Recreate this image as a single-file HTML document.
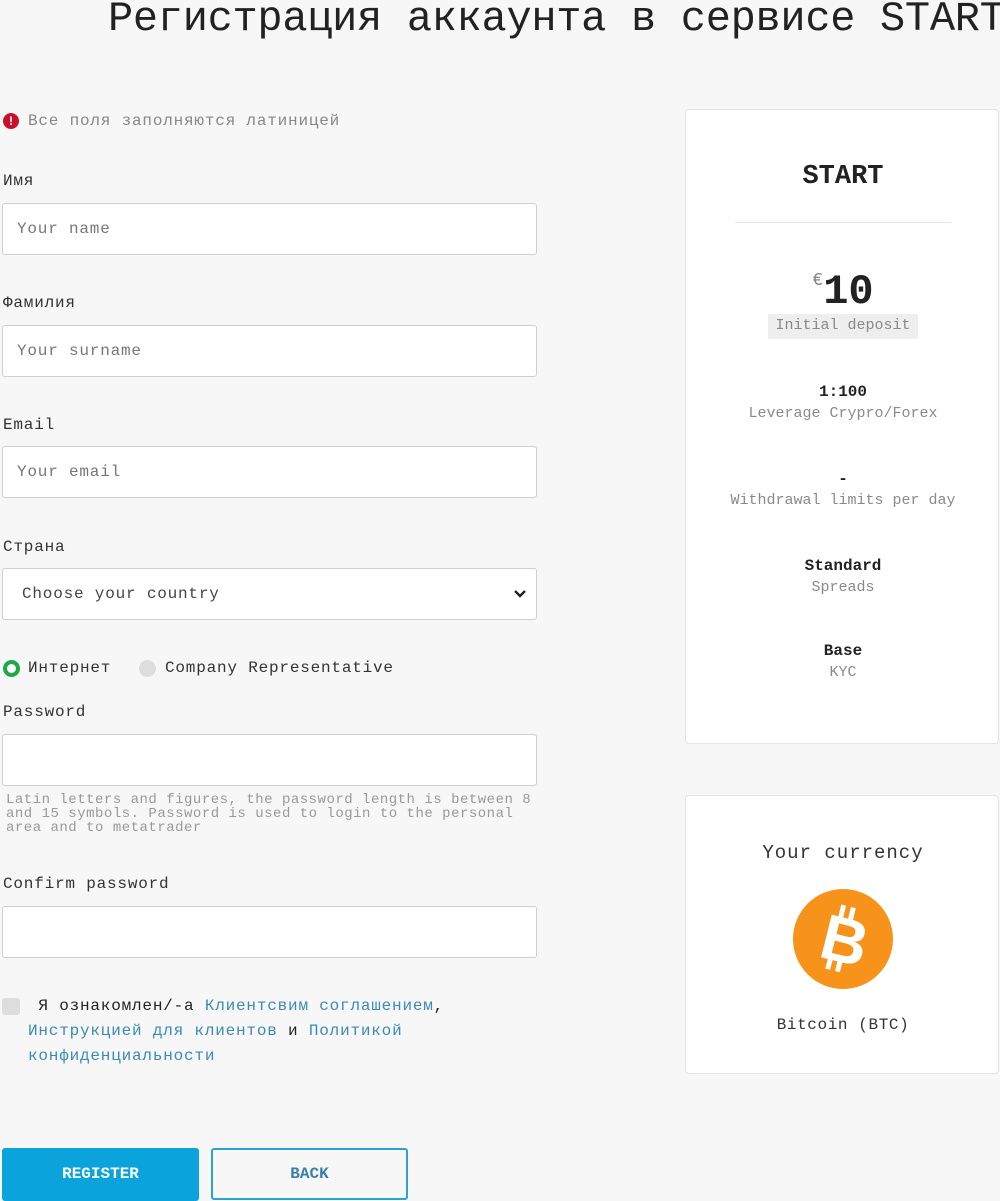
<!DOCTYPE html>
<html><head><meta charset="utf-8"><style>
*{margin:0;padding:0;box-sizing:border-box}
body{width:1000px;height:1201px;background:#f7f7f7;font-family:"Liberation Mono",monospace;color:#222;position:relative;overflow:hidden}
.a{position:absolute;white-space:nowrap}
.t{font-size:16px;letter-spacing:0.8px;line-height:20px}
.lbl{left:3px;color:#333}
.inp{position:absolute;left:2px;width:535px;height:52px;background:#fff;border:1px solid #cfcfcf;border-radius:3px}
.ph{position:absolute;left:14px;top:15px;color:#777}
.card{position:absolute;left:685px;width:314px;background:#fff;border:1px solid #e3e3e3;border-radius:4px}
.c{position:absolute;left:0;width:314px;text-align:center;white-space:nowrap}
.b{font-weight:bold;font-size:16px;color:#222}
.g{font-size:15px;color:#8a8a8a}
.lnk{color:#3a8ab8}
</style></head><body>
<div class="a" style="left:108px;top:-1px;font-size:42px;letter-spacing:-0.3px;line-height:41px;color:#222">Регистрация аккаунта в сервисе START</div>

<div class="a" style="left:3px;top:113px;width:16px;height:16px;border-radius:50%;background:#c8102e;color:#fff;font:bold 12px/16px 'Liberation Sans',sans-serif;text-align:center">!</div>
<div class="a t" style="left:28px;top:111px;color:#888">Все поля заполняются латиницей</div>

<div class="a t lbl" style="top:171px">Имя</div>
<div class="inp" style="top:203px"><div class="ph t">Your name</div></div>
<div class="a t lbl" style="top:293px">Фамилия</div>
<div class="inp" style="top:325px"><div class="ph t">Your surname</div></div>
<div class="a t lbl" style="top:415px">Email</div>
<div class="inp" style="top:446px"><div class="ph t">Your email</div></div>
<div class="a t lbl" style="top:537px">Страна</div>
<div class="inp" style="top:568px"><div class="ph t" style="left:19px;color:#444">Choose your country</div>
<svg style="position:absolute;right:9px;top:20px" width="14" height="10" viewBox="0 0 14 10"><path d="M2 2 L7 7 L12 2" stroke="#222" stroke-width="2.4" fill="none"/></svg></div>

<div class="a" style="left:3px;top:660px;width:17px;height:17px;border-radius:50%;border:4px solid #1fa84a;background:#fff"></div>
<div class="a t" style="left:28px;top:658px;color:#333">Интернет</div>
<div class="a" style="left:139px;top:660px;width:17px;height:17px;border-radius:50%;background:#ddd"></div>
<div class="a t" style="left:165px;top:658px;color:#333">Company Representative</div>

<div class="a t lbl" style="top:702px">Password</div>
<div class="inp" style="top:734px"></div>
<div class="a" style="left:6px;top:793px;font-size:14px;line-height:14px;letter-spacing:0.5px;color:#999;white-space:normal;width:540px">Latin letters and figures, the password length is between 8<br>and 15 symbols. Password is used to login to the personal<br>area and to metatrader</div>
<div class="a t lbl" style="top:874px">Confirm password</div>
<div class="inp" style="top:906px"></div>

<div class="a" style="left:2px;top:998px;width:18px;height:17px;border-radius:3px;background:#ddd"></div>
<div class="a t" style="left:28px;top:994px;line-height:25px;white-space:normal;width:450px;color:#222">&nbsp;Я ознакомлен/-а <span class="lnk">Клиентсвим соглашением</span>,<br><span class="lnk">Инструкцией для клиентов</span> и <span class="lnk">Политикой</span><br><span class="lnk">конфиденциальности</span></div>

<div class="a" style="left:2px;top:1148px;width:197px;height:53px;background:#0aa3dc;border-radius:3px;color:#fff;font-weight:bold;font-size:16px;line-height:53px;text-align:center">REGISTER</div>
<div class="a" style="left:211px;top:1148px;width:197px;height:52px;border:2px solid #2aa3d4;border-radius:3px;color:#3a7fa8;font-weight:bold;font-size:16px;line-height:48px;text-align:center">BACK</div>

<div class="card" style="top:109px;height:635px">
 <div class="c" style="top:51px;font-size:27px;font-weight:bold;line-height:32px">START</div>
 <div class="a" style="left:49px;top:112px;width:216px;height:1px;background:#e6e6e6"></div>
 <div class="c" style="top:146px;font-size:42px;font-weight:bold;line-height:50px"><span style="font-size:18px;color:#888;vertical-align:18px;font-weight:normal">€</span>10</div>
 <div class="a" style="left:82px;top:204px;width:150px;height:25px;background:#eeeeee"></div>
 <div class="c g" style="top:206px;line-height:20px;color:#888">Initial deposit</div>
 <div class="c b" style="top:272px;line-height:20px">1:100</div>
 <div class="c g" style="top:294px;line-height:20px">Leverage Crypro/Forex</div>
 <div class="c b" style="top:359px;line-height:20px">-</div>
 <div class="c g" style="top:381px;line-height:20px">Withdrawal limits per day</div>
 <div class="c b" style="top:446px;line-height:20px">Standard</div>
 <div class="c g" style="top:468px;line-height:20px">Spreads</div>
 <div class="c b" style="top:531px;line-height:20px">Base</div>
 <div class="c g" style="top:553px;line-height:20px">KYC</div>
</div>

<div class="card" style="top:795px;height:279px">
 <div class="c" style="top:45px;font-size:19px;letter-spacing:1px;line-height:24px;color:#333">Your currency</div>
 <svg style="position:absolute;left:107px;top:93px" width="100" height="100" viewBox="0 0 100 100">
  <circle cx="50" cy="50" r="50" fill="#f7931a"/>
  <g transform="rotate(14 50 50)" fill="#fff">
   <text x="52" y="73" text-anchor="middle" font-family="Liberation Sans" font-weight="bold" font-size="64">B</text>
   <rect x="40" y="17" width="5" height="12"/><rect x="50" y="17" width="5" height="12"/>
   <rect x="40" y="71" width="5" height="12"/><rect x="50" y="71" width="5" height="12"/>
  </g>
 </svg>
 <div class="c" style="top:219px;font-size:16px;letter-spacing:0.6px;line-height:20px;color:#333">Bitcoin (BTC)</div>
</div>
</body></html>
